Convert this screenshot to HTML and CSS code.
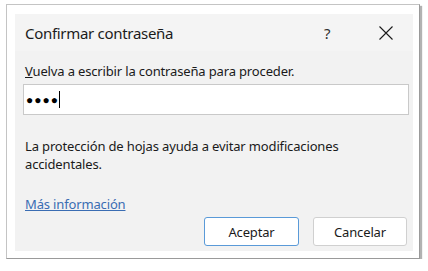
FILE: index.html
```html
<!DOCTYPE html>
<html lang="es">
<head>
<meta charset="utf-8">
<title>Confirmar contraseña</title>
<link rel="stylesheet" href="styles.css">
</head>
<body>
<div class="frame">
  <div class="dialog">
    <div class="titlebar">
      <span class="title">Confirmar contraseña</span>
      <span class="help">?</span>
      <span class="close"><svg width="14" height="14" viewBox="0 0 14 14"><path d="M0.5 0.5 L13.5 13.5 M13.5 0.5 L0.5 13.5" stroke="#1a1a1a" stroke-width="1.1" fill="none"/></svg></span>
    </div>
    <div class="body">
      <div class="label"><u>V</u>uelva a escribir la contraseña para proceder.</div>
      <div class="input"><span class="dots">●●●●</span><span class="caret"></span></div>
      <p class="info">La protección de hojas ayuda a evitar modificaciones accidentales.</p>
      <a class="link" href="#">Más información</a>
      <div class="buttons">
        <button class="btn primary">Aceptar</button>
        <button class="btn">Cancelar</button>
      </div>
    </div>
  </div>
</div>
</body>
</html>
```
FILE: styles.css
```css
html, body {
  margin: 0;
  padding: 0;
  background: #ffffff;
}
body {
  font-family: "Noto Sans", "Open Sans", sans-serif;
  color: #1a1a1a;
}
.frame {
  margin: 4px 0 0 6px;
  width: 398px;
  height: 237px;
  padding: 9px 6px 7px 8px;
  background: #ffffff;
  border: 1px solid #c4c4c4;
  border-right-color: #9a9a9a;
  border-bottom-color: #9a9a9a;
  box-shadow: 2px 2px 1px rgba(0,0,0,0.3);
}
.dialog {
  width: 398px;
  height: 237px;
  background: #f2f2f2;
  display: flex;
  flex-direction: column;
}
.titlebar {
  height: 37px;
  display: flex;
  align-items: center;
  padding-left: 10px;
  background: #f4f4f4;
}
.title {
  font-size: 15px;
  letter-spacing: -0.3px;
  flex: 1;
  color: #1b1b1b;
}
.help {
  font-size: 15px;
  color: #303030;
  width: 14px;
  margin-right: 41px;
}
.close {
  display: flex;
  margin-right: 20px;
}
.body {
  padding: 11px 4px 0 8px;
  display: flex;
  flex-direction: column;
  font-size: 13px;
  letter-spacing: -0.15px;
}
.label {
  line-height: 18px;
  padding-left: 2px;
  margin-bottom: 4px;
}
.input {
  height: 29px;
  background: #ffffff;
  border: 1px solid #c9c9c9;
  display: flex;
  align-items: center;
  padding-left: 2px;
}
.dots {
  font-size: 12px;
  letter-spacing: 1px;
  color: #000;
}
.caret {
  width: 1px;
  height: 17px;
  background: #000;
}
.info {
  margin: 22px 0 0 0;
  padding-left: 2px;
  line-height: 18px;
  width: 380px;
}
.link {
  margin-top: 22px;
  padding-left: 2px;
  align-self: flex-start;
  line-height: 18px;
  color: #3a6db3;
  text-decoration: underline;
}
.buttons {
  margin-top: 4px;
  display: flex;
  justify-content: flex-end;
  gap: 14px;
  padding-right: 2px;
}
.btn {
  font-family: inherit;
  font-size: 13px;
  letter-spacing: -0.15px;
  color: #1a1a1a;
  width: 94px;
  height: 29px;
  background: #ffffff;
  border: 1px solid #d0d0d0;
  border-radius: 3px;
  padding: 0;
}
.btn.primary {
  width: 95px;
  border-color: #5a9ad8;
}
```
